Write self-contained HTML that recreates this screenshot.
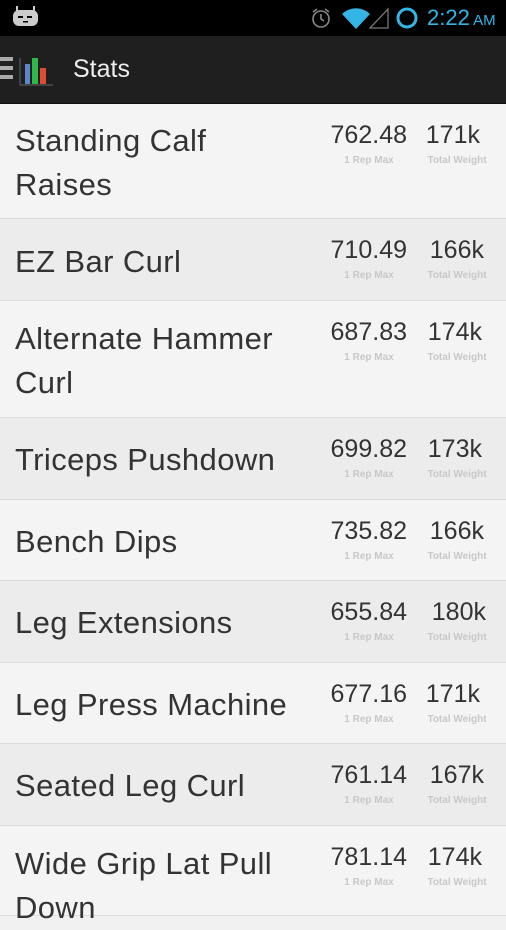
<!DOCTYPE html><html><head><style>
body{margin:0;width:506px;height:900px;overflow:hidden;font-family:"Liberation Sans",sans-serif;background:#f0f0f0}
.sb{height:36px;background:#000;position:relative}
.ab{height:67px;background:#1f1f1f;position:relative;border-bottom:1px solid #111}
.row{position:relative;border-bottom:1px solid #dcdcdc;box-sizing:border-box}
.row:nth-child(odd){background:#f4f4f4}.row:nth-child(even){background:#ececec}
.n{position:absolute;left:15px;font-size:31px;color:#333;line-height:44px;letter-spacing:.4px}
.v{position:absolute;font-size:25px;color:#333;top:17px;text-align:right}
.l{position:absolute;font-size:10px;color:#c8c8c8;top:51px;text-align:center;font-weight:bold}
</style></head><body>
<div class="sb">
<svg style="position:absolute;left:12px;top:6px" width="28" height="22"><rect x="1" y="4" width="25" height="16" rx="6" fill="#ccc"/><rect x="4" y="0" width="2" height="6" fill="#ccc"/><rect x="21" y="0" width="2" height="6" fill="#ccc"/><rect x="6" y="10" width="5" height="2" fill="#000"/><rect x="15" y="10" width="5" height="2" fill="#000"/><rect x="11" y="15" width="5" height="1.5" fill="#000"/></svg>
<svg style="position:absolute;left:310px;top:7px" width="24" height="22"><circle cx="11" cy="12" r="8" fill="none" stroke="#888" stroke-width="1.6"/><path d="M11 7v5l3 2M3 5l4-3M19 5l-4-3" stroke="#888" stroke-width="1.6" fill="none"/></svg>
<svg style="position:absolute;left:341px;top:7px" width="48" height="22"><path d="M1 7a20 20 0 0 1 28 0L15 22z" fill="#33b5e5"/><path d="M47 2L47 21L29 21z" fill="none" stroke="#777" stroke-width="1.3"/></svg>
<svg style="position:absolute;left:395px;top:7px" width="24" height="24"><circle cx="12" cy="11" r="9" fill="none" stroke="#33b5e5" stroke-width="3"/></svg>
<div style="position:absolute;left:427px;top:5px;color:#33b5e5;font-size:22px">2:22<span style="font-size:15px"> AM</span></div>
</div>
<div class="ab">
<div style="position:absolute;left:0;top:21px;width:13px;height:4px;background:#aaa;box-shadow:0 9px #aaa,0 18px #aaa"></div>
<svg style="position:absolute;left:19px;top:20px" width="36" height="30"><rect x="6" y="8" width="5" height="20" fill="#5d87c9"/><rect x="13" y="2" width="6" height="26" fill="#2eb84a"/><rect x="21" y="12" width="6" height="16" fill="#dd4b39"/><path d="M1 2v27h33" stroke="#666" fill="none"/></svg>
<div style="position:absolute;left:73px;top:19px;color:#eee;font-size:25px">Stats</div>
</div>
<div>
<div class="row" style="height:115px"><div class="n" style="top:15px">Standing Calf<br>Raises</div><div class="v" style="right:99px">762.48</div><div class="v" style="right:26px">171k</div><div class="l" style="left:330px;width:78px">1 Rep Max</div><div class="l" style="left:420px;width:74px">Total Weight</div></div>
<div class="row" style="height:82px"><div class="n" style="top:21px">EZ Bar Curl</div><div class="v" style="right:99px">710.49</div><div class="v" style="right:22px">166k</div><div class="l" style="left:330px;width:78px">1 Rep Max</div><div class="l" style="left:420px;width:74px">Total Weight</div></div>
<div class="row" style="height:117px"><div class="n" style="top:16px">Alternate Hammer<br>Curl</div><div class="v" style="right:99px">687.83</div><div class="v" style="right:24px">174k</div><div class="l" style="left:330px;width:78px">1 Rep Max</div><div class="l" style="left:420px;width:74px">Total Weight</div></div>
<div class="row" style="height:82px"><div class="n" style="top:20px">Triceps Pushdown</div><div class="v" style="right:99px">699.82</div><div class="v" style="right:24px">173k</div><div class="l" style="left:330px;width:78px">1 Rep Max</div><div class="l" style="left:420px;width:74px">Total Weight</div></div>
<div class="row" style="height:81px"><div class="n" style="top:20px">Bench Dips</div><div class="v" style="right:99px">735.82</div><div class="v" style="right:22px">166k</div><div class="l" style="left:330px;width:78px">1 Rep Max</div><div class="l" style="left:420px;width:74px">Total Weight</div></div>
<div class="row" style="height:82px"><div class="n" style="top:20px">Leg Extensions</div><div class="v" style="right:99px">655.84</div><div class="v" style="right:20px">180k</div><div class="l" style="left:330px;width:78px">1 Rep Max</div><div class="l" style="left:420px;width:74px">Total Weight</div></div>
<div class="row" style="height:81px"><div class="n" style="top:20px">Leg Press Machine</div><div class="v" style="right:99px">677.16</div><div class="v" style="right:26px">171k</div><div class="l" style="left:330px;width:78px">1 Rep Max</div><div class="l" style="left:420px;width:74px">Total Weight</div></div>
<div class="row" style="height:82px"><div class="n" style="top:20px">Seated Leg Curl</div><div class="v" style="right:99px">761.14</div><div class="v" style="right:22px">167k</div><div class="l" style="left:330px;width:78px">1 Rep Max</div><div class="l" style="left:420px;width:74px">Total Weight</div></div>
<div class="row" style="height:90px"><div class="n" style="top:16px">Wide Grip Lat Pull<br>Down</div><div class="v" style="right:99px">781.14</div><div class="v" style="right:24px">174k</div><div class="l" style="left:330px;width:78px">1 Rep Max</div><div class="l" style="left:420px;width:74px">Total Weight</div></div>
</div>
</body></html>
